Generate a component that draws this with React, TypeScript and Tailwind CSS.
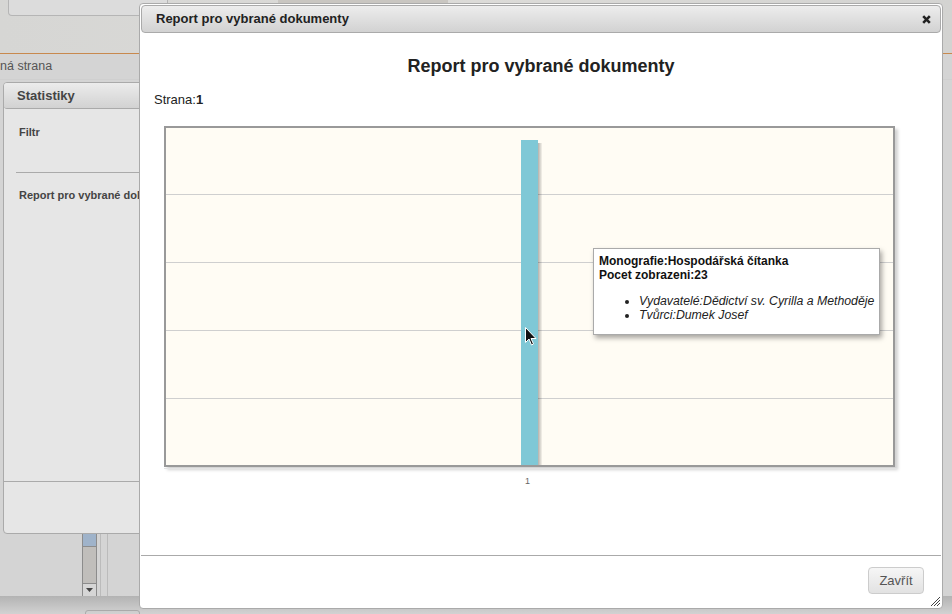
import React from 'react';

export default function App() {
  const gridLines = [66, 134, 202, 270];

  return (
    <div className="relative w-[952px] h-[614px] overflow-hidden bg-[#d4d4d4] font-['Liberation_Sans',Arial,sans-serif] text-[#333]">
      {/* page behind the dialog */}
      <div className="flex flex-col h-full">
        <div className="shrink-0 h-[53px] bg-gradient-to-r from-[#d6d6d4] via-[#dcdbd8] to-[#d3d3d1] flex">
          <div className="ml-[8px] w-[160px] h-[16px] rounded-b-[4px] border border-t-0 border-[#b5b5b5] bg-[#dcdcdc]" />
          <div className="ml-[110px] w-[170px] h-[5px] bg-[#c9c6c1]" />
        </div>
        <div className="shrink-0 h-px bg-[#c8894e]" />
        <div className="shrink-0 h-[26px] flex items-center text-[12.5px] text-[#555] border-b border-[#cfcfcf]">ná strana</div>
        <div className="shrink-0 ml-[3px] mt-[2px] w-[200px] h-[452px] rounded-[4px] border border-[#aaa] bg-[#e6e6e6] flex flex-col">
          <div className="h-[26px] rounded-[3px] border-b border-[#aaa] bg-gradient-to-b from-[#ececec] to-[#d2d2d2] flex items-center pl-[13px] text-[13px] font-bold text-[#444]">
            Statistiky
          </div>
          <div className="pl-[15px] pt-[15px] text-[11px] font-bold text-[#444]">Filtr</div>
          <div className="ml-[12px] mt-[31px] h-px bg-[#aaa]" />
          <div className="pl-[15px] pt-[14px] text-[11px] font-bold text-[#444] whitespace-nowrap">Report pro vybrané dokumenty</div>
          <div className="mt-auto mb-[51px] h-px bg-[#aaa]" />
        </div>
        <div className="shrink-0 flex h-[62px]">
          <div className="ml-[82px] w-[15px] flex flex-col border-x border-[#8c8c8c]">
            <div className="h-[13px] bg-[#9fb3ca] border-b border-[#8c8c8c]" />
            <div className="flex-1 bg-[#c0bebb]" />
            <div className="h-[13px] border-t border-[#8c8c8c] bg-[#d6d6d6] flex items-center justify-center">
              <svg width="7" height="4" viewBox="0 0 7 4"><path d="M0 0h7L3.5 4z" fill="#444" /></svg>
            </div>
          </div>
          <div className="ml-[3px] w-[8px] border-x border-[#bbb]" />
        </div>
        <div className="flex-1 min-h-0 overflow-hidden bg-gradient-to-b from-[#b3b3b3] to-[#d2d2d2]">
          <div className="ml-[85px] mt-[14px] w-[55px] h-[8px] rounded-t-[3px] border border-[#aaa]" />
        </div>
      </div>

      {/* dialog */}
      <div className="absolute left-[139px] top-[3px] w-[804px] h-[606px] rounded-[4px] border border-[#aaa] bg-white p-px flex flex-col">
        <div className="h-[28px] rounded-[4px] border border-[#aaa] bg-gradient-to-b from-[#ededed] to-[#d2d2d2] flex items-center justify-between pl-[14px] pr-[9px]">
          <span className="text-[13px] font-bold text-[#222]">Report pro vybrané dokumenty</span>
          <svg width="9" height="9" viewBox="0 0 9 9">
            <path d="M1.2 1.2l6.6 6.6M7.8 1.2L1.2 7.8" stroke="#222" strokeWidth="2.6" />
          </svg>
        </div>

        <div className="flex-1 flex flex-col">
          <h1 className="mt-[22px] text-center text-[18px] leading-[22px] font-bold text-[#222]">Report pro vybrané dokumenty</h1>
          <p className="mt-[15px] pl-[13px] text-[13px] leading-[16px] text-[#222]">
            Strana:<b>1</b>
          </p>

          <div className="relative ml-[23px] mt-[18px] w-[733px]">
            <div className="w-[731px] h-[341px] border-2 border-[#999] bg-[#fffcf4] shadow-[3px_3px_3px_rgba(0,0,0,0.18)]">
              <svg width="727" height="337" className="block">
                <defs>
                  <linearGradient id="barShadow" x1="0" x2="1" y1="0" y2="0">
                    <stop offset="0" stopColor="#000" stopOpacity="0.3" />
                    <stop offset="1" stopColor="#000" stopOpacity="0.04" />
                  </linearGradient>
                </defs>
                {gridLines.map((y) => (
                  <line key={y} x1="0" x2="727" y1={y + 0.5} y2={y + 0.5} stroke="#cfcfcf" />
                ))}
                <rect x="372" y="15" width="4" height="322" fill="url(#barShadow)" />
                <rect x="355" y="12" width="17" height="325" fill="#7fc8d6" />
              </svg>
            </div>
            <div className="mt-[1px] h-px bg-[#e3e3e3]" />
            <div className="pl-[361px] pt-[6px] text-[9px] text-[#666]">1</div>

            {/* tooltip */}
            <div className="absolute left-[429px] top-[122px] w-[287px] h-[87px] border border-[#aaa] bg-white shadow-[2px_3px_5px_rgba(0,0,0,0.35)] pl-[5px] pt-[5px] text-[12px] leading-[14px] text-[#111]">
              <div className="font-bold">Monografie:Hospodářská čítanka</div>
              <div className="font-bold">Pocet zobrazeni:23</div>
              <ul className="mt-[12px] pl-[40px] list-disc italic text-[12.3px] leading-[14px] text-[#222]">
                <li>Vydavatelé:Dědictví sv. Cyrilla a Methoděje</li>
                <li>Tvůrci:Dumek Josef</li>
              </ul>
            </div>

            {/* mouse pointer */}
            <svg className="absolute left-[361px] top-[201px]" width="12" height="19" viewBox="0 0 12 19">
              <path d="M0.5 0.5v15l3.5-3.5 2.5 6 2-1-2.5-5.5h5z" fill="#111" stroke="#fff" strokeWidth="1" />
            </svg>
          </div>

          <div className="mt-auto border-t border-[#aaa] h-[52px] flex items-start justify-end pr-[17px] pt-[11px]">
            <button className="w-[56px] h-[27px] rounded-[4px] border border-[#ccc] bg-gradient-to-b from-[#f6f6f6] to-[#e2e2e2] text-[13px] text-[#555]">
              Zavřít
            </button>
          </div>
        </div>

        <svg className="absolute right-[1px] bottom-[1px]" width="12" height="12" viewBox="0 0 12 12">
          <path d="M11 2L2 11M11 5L5 11M11 8L8 11" stroke="#444" strokeWidth="1" />
        </svg>
      </div>
    </div>
  );
}
